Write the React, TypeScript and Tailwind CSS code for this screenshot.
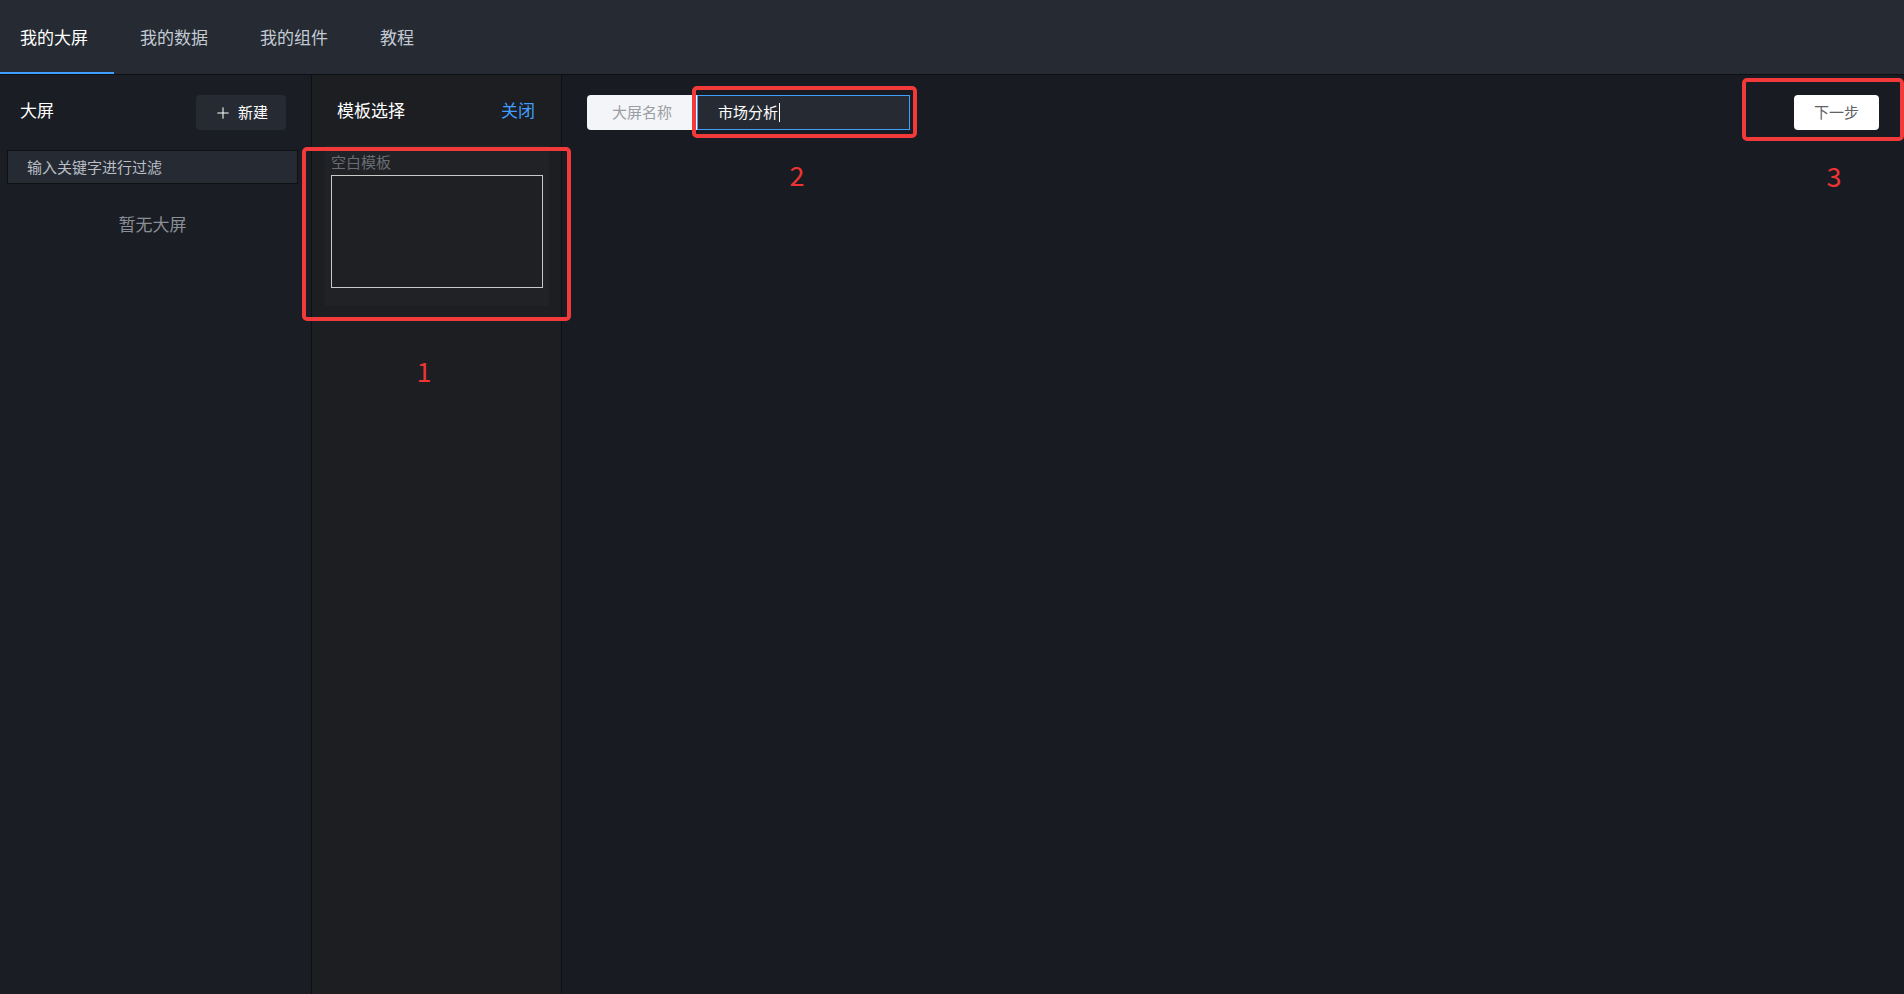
import React from 'react';
import { Plus } from 'lucide-react';

const tabs = ['我的大屏', '我的数据', '我的组件', '教程'];

// red callout frame with a step number under it
const Callout: React.FC<{ frame: string; label: string; n: number }> = ({ frame, label, n }) => (
  <>
    <div className={`pointer-events-none absolute rounded-[5px] border-4 border-[#f23a3a] ${frame}`} />
    <span
      className={`pointer-events-none absolute -translate-x-1/2 text-[27px] leading-none text-[#ec3434] ${label}`}
    >
      {n}
    </span>
  </>
);

const App: React.FC = () => {
  return (
    <div
      className="flex h-screen w-full flex-col bg-[#181b21] text-white"
      style={{ fontFamily: '"Noto Sans CJK SC", "Noto Sans", sans-serif' }}
    >
      <header className="flex h-[75px] shrink-0 border-b border-[#0d0f12] bg-[#262b33]">
        {tabs.map((t, i) => (
          <div key={t} className="relative flex h-[74px] w-[120px] items-center pl-5">
            <span className={`text-[17px] ${i === 0 ? 'text-white' : 'text-[#c3cad3]'}`}>{t}</span>
            {i === 0 && <div className="absolute bottom-0 left-0 h-[2px] w-[114px] bg-[#409eff]" />}
          </div>
        ))}
      </header>

      <div className="flex min-h-0 flex-1">
        {/* screen list */}
        <aside className="w-[312px] shrink-0 border-r border-[#0e1014] bg-[#1a1d23]">
          <div className="flex items-center justify-between pl-5 pr-[25px] pt-5">
            <span className="mb-[6px] text-[17px] text-white">大屏</span>
            <button className="flex h-[35px] w-[90px] items-center justify-center gap-[6px] rounded bg-[#262b33] text-[15px] text-white">
              <Plus size={18} strokeWidth={1.4} />
              新建
            </button>
          </div>
          <div className="ml-[7px] mt-5 flex h-[34px] w-[291px] items-center border border-[#0e1014] bg-[#262b33] pl-[19px] text-[15px] text-[#b9bec6]">
            输入关键字进行过滤
          </div>
          <p className="mt-[27px] pr-[6px] text-center text-[17px] text-[#8a8e96]">暂无大屏</p>
        </aside>

        {/* template picker */}
        <section className="w-[250px] shrink-0 border-r border-[#0e1014] bg-[#1c1e22]">
          <div className="mt-[17px] flex h-[35px] items-center justify-between pl-[25px] pr-[26px]">
            <span className="text-[17px] text-white">模板选择</span>
            <button className="text-[17px] text-[#409eff]">关闭</button>
          </div>
          <div className="relative ml-[13px] mt-[18px] h-[161px] w-[224px] bg-[#202226] px-[6px] pt-[7px]">
            <div className="h-5 text-[15px] leading-5 text-[#686c73]">空白模板</div>
            <div className="mt-[3px] h-[113px] w-[212px] border border-[#c9c9c9] bg-[#1f2024]" />
            <Callout n={1} frame="-left-[23px] -right-[22px] top-[2px] -bottom-[15px]" label="left-[99px] top-[212px]" />
          </div>
        </section>

        {/* name + next step */}
        <main className="flex flex-1 items-start justify-between pl-[25px] pr-[25px] pt-5">
          <div className="flex h-[35px]">
            <div className="flex w-[110px] items-center justify-center rounded-l bg-[#f4f5f8] text-[15px] text-[#9a9da3]">
              大屏名称
            </div>
            <div className="relative flex w-[213px] items-center border border-[#409eff] bg-[#262b33] pl-[20px] text-[15px] text-white">
              市场分析
              <span className="ml-px h-[19px] w-px bg-white" />
              <Callout n={2} frame="-left-[6px] -right-[8px] -top-[10px] -bottom-[9px]" label="left-[99px] top-[65px]" />
            </div>
          </div>
          <div className="relative">
            <button className="h-[35px] w-[85px] rounded bg-white text-[15px] text-[#606266]">下一步</button>
            <Callout n={3} frame="-left-[52px] -right-[25px] -top-[17px] -bottom-[11px]" label="left-[40px] top-[67px]" />
          </div>
        </main>
      </div>
    </div>
  );
};

export default App;
